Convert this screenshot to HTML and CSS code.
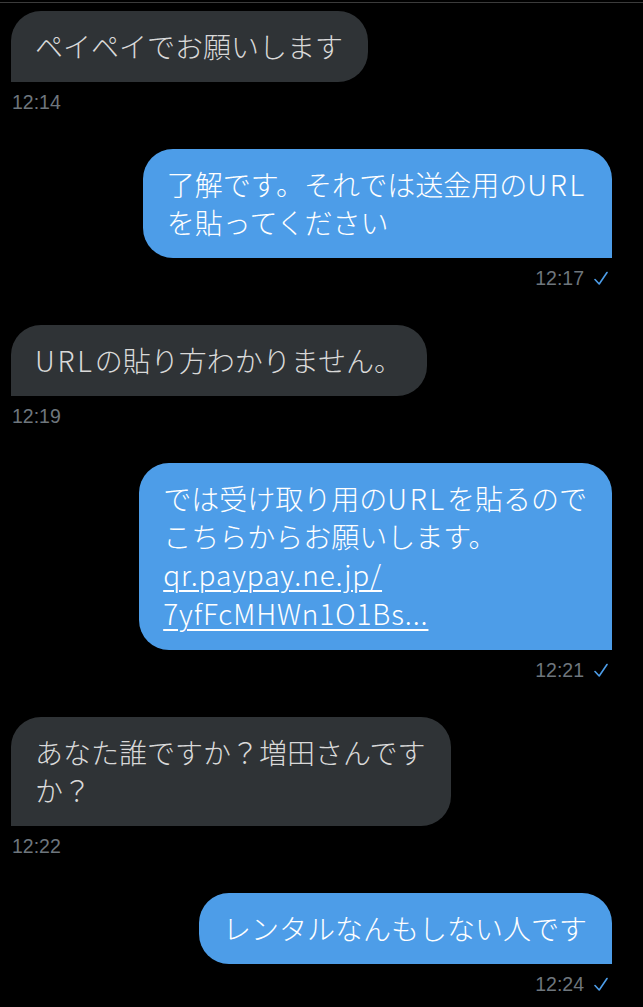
FILE: index.html
```html
<!DOCTYPE html>
<html lang="ja">
<head>
<meta charset="utf-8">
<title>DM</title>
<link rel="stylesheet" href="styles.css">
</head>
<body>
<div class="chat">
  <div class="msg in">
    <div class="bubble">ペイペイでお願いします</div>
    <div class="meta">12:14</div>
  </div>
  <div class="msg out">
    <div class="bubble">了解です。それでは送金用の<span class="lat">URL</span><br>を貼ってください</div>
    <div class="meta">12:17 <svg class="check" viewBox="0 0 14 15" width="14" height="15"><path d="M1 8.5 L5.2 13 L13 1.5" fill="none" stroke="currentColor" stroke-width="1.6" stroke-linecap="round" stroke-linejoin="round"/></svg></div>
  </div>
  <div class="msg in">
    <div class="bubble"><span class="lat">URL</span>の貼り方わかりません。</div>
    <div class="meta">12:19</div>
  </div>
  <div class="msg out">
    <div class="bubble">では受け取り用の<span class="lat">URL</span>を貼るので<br>こちらからお願いします。<br><a class="link" href="#">qr.paypay.ne.jp/<br>7yfFcMHWn1O1Bs...</a></div>
    <div class="meta">12:21 <svg class="check" viewBox="0 0 14 15" width="14" height="15"><path d="M1 8.5 L5.2 13 L13 1.5" fill="none" stroke="currentColor" stroke-width="1.6" stroke-linecap="round" stroke-linejoin="round"/></svg></div>
  </div>
  <div class="msg in">
    <div class="bubble">あなた誰ですか？増田さんです<br>か？</div>
    <div class="meta">12:22</div>
  </div>
  <div class="msg out">
    <div class="bubble">レンタルなんもしない人です</div>
    <div class="meta">12:24 <svg class="check" viewBox="0 0 14 15" width="14" height="15"><path d="M1 8.5 L5.2 13 L13 1.5" fill="none" stroke="currentColor" stroke-width="1.6" stroke-linecap="round" stroke-linejoin="round"/></svg></div>
  </div>
</div>
</body>
</html>
```
FILE: styles.css
```css
html, body {
  margin: 0;
  padding: 0;
  background: #000;
}
body {
  width: 643px;
  height: 1007px;
  overflow: hidden;
  font-family: "Noto Sans CJK JP", "Noto Sans", sans-serif;
  font-weight: 300;
}
.chat {
  margin-top: 2px;
  border-top: 1px solid #3b3b3b;
  padding: 8px 31px 0 11px;
  display: flex;
  flex-direction: column;
  gap: 34px;
}
.msg {
  display: flex;
  flex-direction: column;
}
.msg.in { align-items: flex-start; }
.msg.out { align-items: flex-end; }
.bubble {
  box-sizing: border-box;
  max-width: 480px;
  padding: 16px 25px 17px 24px;
  font-size: 28px;
  line-height: 38px;
  border-radius: 30px;
  white-space: nowrap;
}
.lat {
  letter-spacing: 2.8px;
}
.in .bubble {
  background: #2f3336;
  color: #d9d9d9;
  border-bottom-left-radius: 0;
}
.out .bubble {
  background: #4d9de8;
  color: #fff;
  border-bottom-right-radius: 0;
}
.link {
  color: #fff;
  text-decoration: underline;
  text-decoration-thickness: 2px;
  text-underline-offset: 4px;
  line-height: 39px;
  letter-spacing: 0.9px;
}
.meta {
  margin-top: 7px;
  height: 26px;
  line-height: 26px;
  font-family: "Liberation Sans", Arial, sans-serif;
  font-weight: 400;
  font-size: 19.5px;
  color: #6e767d;
  display: flex;
  align-items: center;
  gap: 10px;
}
.in .meta { padding-left: 1px; }
.out .meta { padding-right: 4px; }
.check {
  color: #4d9de8;
  display: block;
}
```
